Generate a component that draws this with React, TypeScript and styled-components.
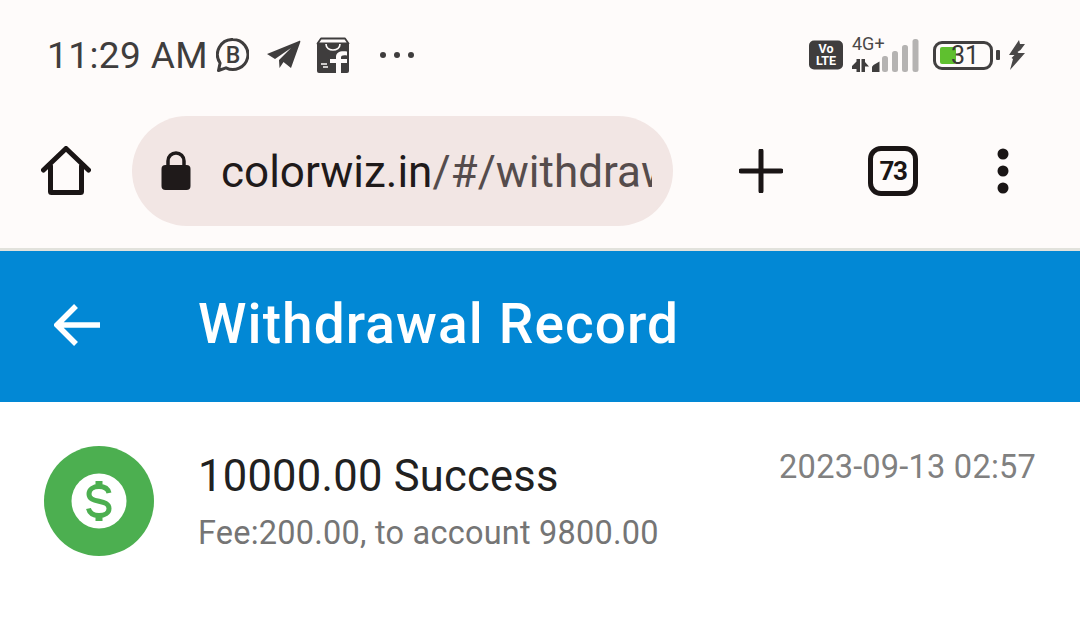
import React from "react";
import styled, { createGlobalStyle } from "styled-components";

const Global = createGlobalStyle`
  html, body { margin: 0; padding: 0; background: #fff; }
  body { font-family: Roboto, "Liberation Sans", sans-serif; width: 1080px; height: 624px; overflow: hidden; }
`;
const Page = styled.div`width: 1080px; height: 624px; display: flex; flex-direction: column; background: #fff;`;
const StatusBar = styled.div`
  height: 108px; background: #fefbfa; display: flex; align-items: center; justify-content: space-between;
  padding: 2px 54px 0 47px; box-sizing: border-box; color: #3f3d3d;
`;
const StatusGroup = styled.div`display: flex; align-items: center;`;
const Clock = styled.span`font-size: 37px; letter-spacing: 0.4px; line-height: 1; margin-right: 8px; white-space: nowrap;`;
const StatusIcon = styled.svg<{ $ml?: number }>`display: block; flex: none; margin-left: ${p => p.$ml ?? 0}px;`;
const Network = styled.div`display: flex; flex-direction: column; width: 68px; margin-left: 9px; height: 40px; position: relative;`;
const NetLabel = styled.span`font-size: 18px; line-height: 18px; color: #4a4848;`;
const Signal = styled.svg`position: absolute; left: 0; top: 1px;`;
const Battery = styled.div`
  width: 60px; height: 29px; margin-left: 13px; border: 3.5px solid #424040; border-radius: 9px; box-sizing: border-box;
  display: flex; align-items: center; position: relative; padding-left: 3.5px;
`;
const BatteryFill = styled.div`width: 16px; height: 17px; background: #5fc02f; border-radius: 2px;`;
const BatteryText = styled.span`position: absolute; left: 15px; top: -2px; font-size: 25px; line-height: 28px; color: #3a3838;`;
const BatteryCap = styled.div`width: 4px; height: 10px; background: #424040; border-radius: 1px; margin-left: 3px;`;
const Toolbar = styled.div`
  height: 140px; background: #fefbfa; display: flex; align-items: center; box-sizing: border-box; padding: 0 0 14px;
`;
const ToolSlot = styled.div<{ $w: number }>`width: ${p => p.$w}px; flex: none; display: flex; justify-content: center; align-items: center;`;
const UrlPill = styled.div`
  width: 541px; height: 110px; border-radius: 55px; background: #f2e6e4; display: flex; align-items: center;
  box-sizing: border-box; padding: 0 21px 0 29px; flex: none;
`;
const UrlText = styled.div`
  margin-left: 30px; padding-top: 3px; font-size: 44px; line-height: 107px; white-space: nowrap; overflow: hidden; flex: 1; color: #554c4c;
`;
const UrlHost = styled.span`color: #1f1a1a;`;
const TabCount = styled.div`
  width: 50px; height: 50px; box-sizing: border-box; border: 5px solid #1a1515; border-radius: 13px; display: flex;
  align-items: center; justify-content: center; font-size: 26px; font-weight: 700; color: #1a1515; letter-spacing: -1.5px;
`;
const Divider = styled.div`height: 3px; background: #e2e2dc;`;
const Header = styled.div`height: 151px; background: #0288d5; display: flex; align-items: center; box-sizing: border-box; padding-left: 54px; flex: none;`;
const Title = styled.h1`margin: 0 0 4px 96px; font-size: 55px; font-weight: 500; color: #fff; letter-spacing: 1.1px; line-height: 1; white-space: nowrap;`;
const BackIcon = styled.svg`flex: none; margin-bottom: 3px;`;
const Row = styled.div`display: flex; padding: 44px 44px 0; align-items: flex-start;`;
const Avatar = styled.div`width: 110px; height: 110px; border-radius: 50%; background: #4caf50; flex: none; display: flex; align-items: center; justify-content: center;`;
const RowBody = styled.div`margin-left: 45px; flex: 1; padding-top: 6px;`;
const RowTitle = styled.div`font-size: 43.5px; line-height: 50px; color: #212121; letter-spacing: 0.25px; margin-left: -1px;`;
const RowSub = styled.div`font-size: 32.5px; line-height: 38px; color: #757575; margin: 12px 0 0 -1px; letter-spacing: 0.22px;`;
const RowDate = styled.div`font-size: 32.6px; line-height: 38px; color: #808080; margin-top: 2px; letter-spacing: 0.2px; white-space: nowrap;`;

export default function App() {
  return (
    <Page>
      <Global />
      <StatusBar>
        <StatusGroup>
          <Clock>11:29 AM</Clock>
          <StatusIcon width="33" height="34" viewBox="0 0 33 34">
            <path d="M17 1.500a15 15 0 1 1-7 28.300L2.500 32.500l1.600-7.500A15 15 0 0 1 17 1.500z" fill="none" stroke="#3f3d3d" strokeWidth="3" strokeLinejoin="round" />
            <text x="17" y="24.500" textAnchor="middle" fontFamily="Roboto, sans-serif" fontSize="23" fontWeight="500" fill="#3f3d3d">B</text>
          </StatusIcon>
          <StatusIcon $ml={17} width="36" height="30" viewBox="0 0 36 30">
            <path d="M1 14 33 1c1-.4 1.500 0 1.300 1L25 28l-7.500-6L13.500 28 13 20 25 8 9 19z" fill="#3f3d3d" />
          </StatusIcon>
          <StatusIcon $ml={14} width="34" height="36" viewBox="0 0 34 36">
            <path d="M1 6h32v28a2 2 0 0 1-2 2H3a2 2 0 0 1-2-2z" fill="#3f3d3d" />
            <path d="M5 1.500h24l3.500 5h-31z" fill="#fefbfa" stroke="#3f3d3d" strokeWidth="1.800" strokeLinejoin="round" />
            <path d="M10 7c0 8 14 8 14 0" fill="none" stroke="#fefbfa" strokeWidth="1.700" />
            <path d="M20 36V26h-6v-4h6v-2c0-4.500 4-6.500 11-5.500v4c-4-.6-6 0-6 2v1.500h6v4h-6v10z" fill="#fefbfa" />
            <path d="M5 27h6M7 30h5" stroke="#fefbfa" strokeWidth="1.300" />
          </StatusIcon>
          <StatusIcon $ml={29} width="36" height="8" viewBox="0 0 36 8">
            <circle cx="4" cy="4" r="3" fill="#3f3d3d" /><circle cx="18" cy="4" r="3" fill="#3f3d3d" /><circle cx="32" cy="4" r="3" fill="#3f3d3d" />
          </StatusIcon>
        </StatusGroup>
        <StatusGroup>
          <StatusIcon width="34" height="30" viewBox="0 0 34 30">
            <rect width="34" height="29" y="0.500" rx="5" fill="#3f3d3d" />
            <text x="17" y="13" textAnchor="middle" fontFamily="Roboto, sans-serif" fontSize="12.500" fontWeight="700" fill="#fff">Vo</text>
            <text x="17" y="25" textAnchor="middle" fontFamily="Roboto, sans-serif" fontSize="12.500" fontWeight="700" fill="#fff">LTE</text>
          </StatusIcon>
          <Network>
            <NetLabel>4G+</NetLabel>
            <Signal width="68" height="40" viewBox="0 0 68 40">
              <path d="M0 30 4.500 25.500V23h3.500v13H4.500v-3H0zM9.500 23H13v3l4 4.500h-4V36H9.500z" fill="#3f3d3d" />
              <path d="M20 36v-4.500c0-1 .5-1.500 1.500-2.500l6-3.500V36z" fill="#3f3d3d" />
              <rect x="30" y="20" width="6" height="16" rx="2.500" fill="#b5b3b2" />
              <rect x="40" y="15" width="6" height="21" rx="2.500" fill="#b5b3b2" />
              <rect x="50" y="9" width="6" height="27" rx="2.500" fill="#b5b3b2" />
              <rect x="60.500" y="3" width="6" height="33" rx="2.500" fill="#b5b3b2" />
            </Signal>
          </Network>
          <Battery>
            <BatteryFill />
            <BatteryText>31</BatteryText>
          </Battery>
          <BatteryCap />
          <StatusIcon $ml={8} width="18" height="30" viewBox="0 0 18 30">
            <path d="M11 0 1 15h5.500L3.500 18l1.500 1L2 30 17 13h-6.500L9.500 12l3-2 4.500-6h-5z" fill="#4a4848" />
          </StatusIcon>
        </StatusGroup>
      </StatusBar>
      <Toolbar>
        <ToolSlot $w={132}>
          <svg width="50" height="50" viewBox="0 0 50 50">
            <path d="M2.500 24 25 2.500 47.500 24M9.500 20v25.500a1 1 0 0 0 1 1h29a1 1 0 0 0 1-1V20" fill="none" stroke="#1a1515" strokeWidth="5" strokeLinecap="round" strokeLinejoin="round" />
          </svg>
        </ToolSlot>
        <UrlPill>
          <svg width="30" height="40" viewBox="0 0 30 40" style={{ flex: "none" }}>
            <path d="M7 16V10a8 8 0 0 1 16 0v6" fill="none" stroke="#1f1a1a" strokeWidth="3.500" />
            <rect x="0.500" y="14" width="29" height="25" rx="4" fill="#1f1a1a" />
          </svg>
          <UrlText><UrlHost>colorwiz.in</UrlHost>/#/withdrawal</UrlText>
        </UrlPill>
        <ToolSlot $w={176}>
          <svg width="44" height="44" viewBox="0 0 44 44">
            <path d="M2 22h40M22 2v40" stroke="#1a1515" strokeWidth="5" strokeLinecap="round" />
          </svg>
        </ToolSlot>
        <ToolSlot $w={88}><TabCount>73</TabCount></ToolSlot>
        <ToolSlot $w={131}>
          <svg width="14" height="46" viewBox="0 0 14 46">
            <circle cx="7" cy="6" r="5.500" fill="#1a1515" /><circle cx="7" cy="23" r="5.500" fill="#1a1515" /><circle cx="7" cy="40" r="5.500" fill="#1a1515" />
          </svg>
        </ToolSlot>
      </Toolbar>
      <Divider />
      <Header>
        <BackIcon width="48" height="44" viewBox="0 0 48 44">
          <path d="M46 22H4M22 3 3 22l19 19" fill="none" stroke="#fff" strokeWidth="5.500" />
        </BackIcon>
        <Title>Withdrawal Record</Title>
      </Header>
      <Row>
        <Avatar>
          <svg width="56" height="56" viewBox="0 0 56 56">
            <circle cx="28" cy="28" r="27.500" fill="#fff" />
            <path d="M38 20c-1-4.500-5-6.500-10-6.500-5.500 0-10 2.700-10 7.500 0 10 20 4.500 20 14.500 0 4.500-4.500 7-10 7-5.500 0-9.500-2.500-10.500-7" fill="none" stroke="#4caf50" strokeWidth="5" />
            <path d="M28 8v40" stroke="#4caf50" strokeWidth="7" strokeDasharray="7 26 7" />
          </svg>
        </Avatar>
        <RowBody>
          <RowTitle>10000.00 Success</RowTitle>
          <RowSub>Fee:200.00, to account 9800.00</RowSub>
        </RowBody>
        <RowDate>2023-09-13 02:57</RowDate>
      </Row>
    </Page>
  );
}
